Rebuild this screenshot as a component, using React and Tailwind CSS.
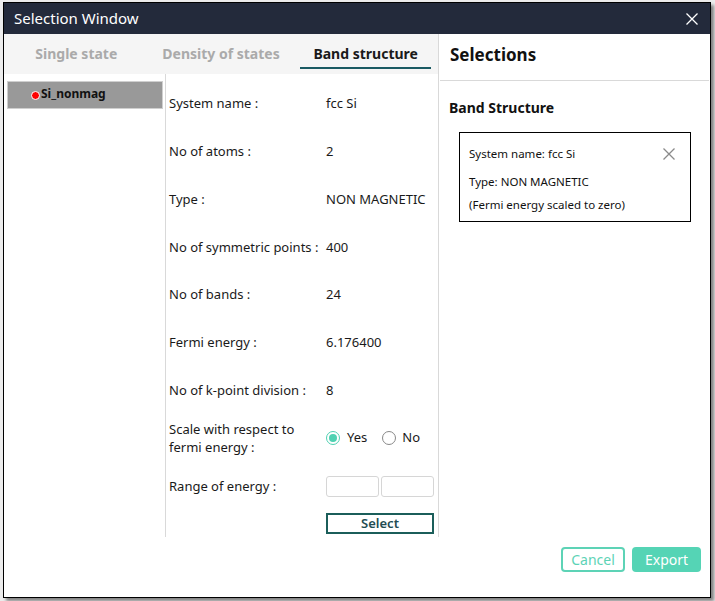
import React from "react";

const rows = [
  ["System name :", "fcc Si"],
  ["No of atoms :", "2"],
  ["Type :", "NON MAGNETIC"],
  ["No of symmetric points :", "400"],
  ["No of bands :", "24"],
  ["Fermi energy :", "6.176400"],
  ["No of k-point division :", "8"],
];

const CloseIcon = ({ className }) => (
  <svg viewBox="0 0 12 12" className={className} fill="none" stroke="currentColor" strokeWidth="1.3">
    <path d="M0.5 0.5 L11.5 11.5 M11.5 0.5 L0.5 11.5" />
  </svg>
);

export default function App() {
  return (
    <div className="min-h-screen w-[715px] h-[601px] bg-[#ececec] font-['Noto_Sans',sans-serif] pl-[3px] pt-[2px]">
      <div className="w-[708px] h-[596px] border border-black bg-white flex flex-col shadow-[3px_3px_3px_rgba(0,0,0,0.45)]">
        {/* Title bar */}
        <div className="h-[31px] bg-[#232a3b] flex items-center justify-between px-[10px] shrink-0">
          <span className="text-white text-[15px]">Selection Window</span>
          <CloseIcon className="w-[12px] h-[12px] text-white mr-[2px]" />
        </div>

        {/* Body */}
        <div className="flex h-[503px]">
          {/* Left panel */}
          <div className="w-[435px] flex flex-col border-r border-[#d9d9d9]">
            <div className="h-[40px] bg-[#f5f5f5] grid grid-cols-3 shrink-0">
              <div className="flex items-center justify-center pb-[2px] text-[14px] font-bold text-[#aaaaaa]">Single state</div>
              <div className="flex items-center justify-center pb-[2px] text-[14px] font-bold text-[#aaaaaa]">Density of states</div>
              <div className="flex flex-col justify-center items-stretch px-[7px] pt-[4px]">
                <div className="text-center text-[14px] font-bold text-[#1a1a1a] pb-[3px]">Band structure</div>
                <div className="h-[2px] bg-[#1a5a63]" />
              </div>
            </div>

            <div className="flex flex-1">
              {/* System list */}
              <div className="w-[162px] border-r border-[#d9d9d9] pl-[3px] pt-[7px]">
                <div className="h-[28px] w-[156px] bg-[#999999] border border-[#cfcfcf] flex items-center pl-[23px] pb-[2px]">
                  <span className="w-[9px] h-[9px] rounded-full bg-[#ff0000] border border-white mr-[1px] mt-[3px]" />
                  <span className="text-[12px] font-bold text-[#111]">Si_nonmag</span>
                </div>
              </div>

              {/* Form */}
              <div className="flex-1 pl-[3px] pt-[6px] text-[13px] text-[#1a1a1a]">
                {rows.map(([label, value]) => (
                  <div key={label} className="h-[47.8px] flex items-center">
                    <span className="w-[157px]">{label}</span>
                    <span>{value}</span>
                  </div>
                ))}
                <div className="h-[48px] flex items-center pb-[2px]">
                  <span className="w-[157px] leading-[18px]">
                    Scale with respect to
                    <br />
                    fermi energy :
                  </span>
                  <label className="flex items-center">
                    <span className="w-[14px] h-[14px] rounded-full border border-[#4fd1b2] flex items-center justify-center">
                      <span className="w-[8px] h-[8px] rounded-full bg-[#4fd1b2]" />
                    </span>
                    <span className="ml-[7px]">Yes</span>
                  </label>
                  <label className="flex items-center ml-[15px]">
                    <span className="w-[14px] h-[14px] rounded-full border border-[#888]" />
                    <span className="ml-[6px]">No</span>
                  </label>
                </div>
                <div className="h-[48px] flex items-center">
                  <span className="w-[157px]">Range of energy :</span>
                  <input className="w-[53px] h-[21px] border border-[#d6d6d6] rounded-[3px] outline-none" />
                  <input className="w-[53px] h-[21px] border border-[#d6d6d6] rounded-[3px] outline-none ml-[2px]" />
                </div>
                <div className="flex pl-[157px] pt-[2px]">
                  <button className="w-[108px] h-[21px] border-2 border-[#1b5e5a] text-[13px] font-semibold text-[#234c52] leading-none">
                    Select
                  </button>
                </div>
              </div>
            </div>
          </div>

          {/* Right panel */}
          <div className="flex-1 flex flex-col">
            <div className="h-[47px] border-b border-[#d9d9d9] mx-[1px] flex items-center pl-[10px] pb-[4px] shrink-0">
              <span className="text-[17px] font-bold text-[#111]">Selections</span>
            </div>
            <div className="pl-[10px] pt-[16px]">
              <div className="text-[14px] font-bold text-[#111]">Band Structure</div>
              <div className="mt-[14px] ml-[10px] w-[232px] h-[90px] border border-black px-[9px] pt-[12px] text-[11.5px] text-[#111] relative">
                <div>System name: fcc Si</div>
                <div className="mt-[11px]">Type: NON MAGNETIC</div>
                <div className="mt-[5px]">(Fermi energy scaled to zero)</div>
                <CloseIcon className="absolute right-[15px] top-[15px] w-[12px] h-[12px] text-[#8a8a8a]" />
              </div>
            </div>
          </div>
        </div>

        {/* Footer */}
        <div className="flex-1 flex justify-end items-start pt-[10px] pr-[9px] gap-[7px]">
          <button className="w-[64px] h-[25px] rounded-[4px] border-2 border-[#5dd3b6] text-[#5dd3b6] text-[14px] leading-none">
            Cancel
          </button>
          <button className="w-[69px] h-[25px] rounded-[4px] bg-[#55d4b5] text-white text-[14px] leading-none">
            Export
          </button>
        </div>
      </div>
    </div>
  );
}
